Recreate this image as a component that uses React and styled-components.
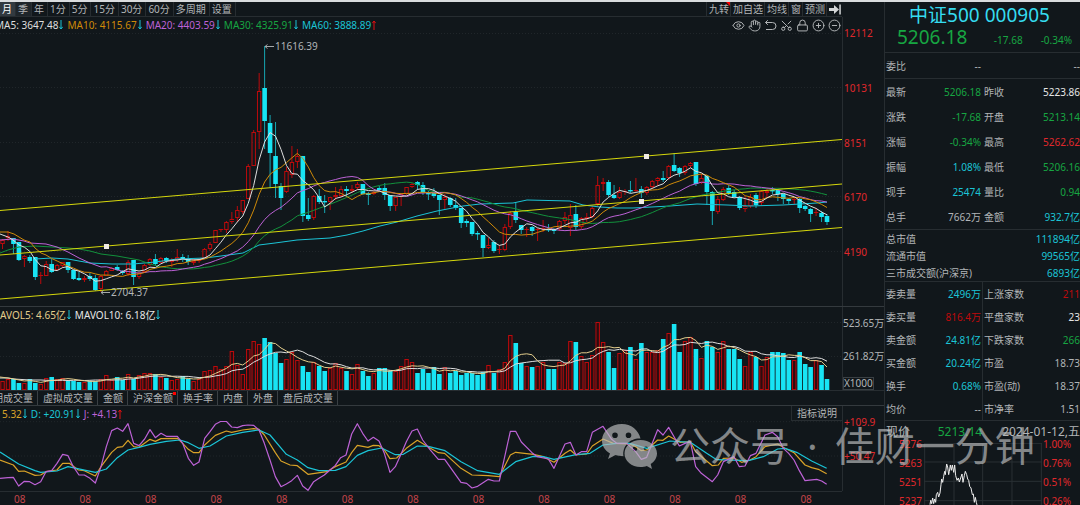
import React from "react";
import styled, { createGlobalStyle, css } from "styled-components";
import { Eye, Hand, Scissors, Lock, CirclePlus, CircleMinus } from "lucide-react";

const C = {
  bg: "#11171b",
  line: "#272d31",
  text: "#b2b5b7",
  white: "#e6e6e6",
  red: "#e0282c",
  deepRed: "#bd0a0c",
  green: "#17a642",
  cyan: "#1bc4d6",
  bright: "#18e4f4",
  orange: "#cf8a08",
  gold: "#d9a328",
  cream: "#e3cd8c",
  purple: "#bd62d6",
  yellow: "#d6d80c",
};

const Global = createGlobalStyle`
  * { box-sizing: border-box; }
  body {
    margin: 0;
    background: ${C.bg};
    color: ${C.text};
    font: 10px/14px "Noto Sans", "Noto Sans CJK SC", sans-serif;
  }
  button { font: inherit; color: inherit; background: none; border: 0; padding: 0; cursor: pointer; }
  dl, dd, dt, h1, p { margin: 0; font-weight: 400; }
`;

/* ---------- market data, in chart units ---------- */
// direction, high, body top, body bottom, low
const CANDLES = `
r 239 240 244 249|r 231 236 238 241|c 238 238 244 254|c 242 242 260 261|r 255 256 259 267|c 255 257 261 263
c 257 257 277 280|r 272 275 276 284|r 261 264 276 276|c 259 264 272 273|r 264 265 270 270|r 262 262 266 268
c 262 262 270 273|c 270 270 279 280|c 272 278 280 281|r 276 278 280 282|c 273 276 279 281|c 275 278 290 291
r 275 276 289 292|r 270 271 276 276|r 267 268 271 271|c 265 267 270 271|c 270 271 273 275|r 260 262 274 276
c 260 260 277 285|r 272 273 277 279|r 264 265 272 273|r 258 259 265 266|c 254 259 264 266|r 257 258 263 263
c 257 258 261 263|r 258 260 262 267|r 249 257 260 262|c 254 257 259 262|c 255 259 262 265|r 259 261 263 265
r 258 259 261 263|r 248 249 258 259|r 242 244 249 251|r 230 230 243 243|r 229 229 230 232|r 221 222 230 233
r 212 219 222 224|r 206 210 218 222|r 200 200 212 214|r 164 166 199 199|r 130 132 166 166|r 73 91 132 149
c 46 88 121 149|c 115 123 153 188|c 122 156 184 198|c 183 186 198 210|r 167 171 192 193|r 146 162 175 178
r 149 156 162 168|c 156 156 216 222|c 198 215 219 221|r 195 196 218 220|c 189 196 202 204|c 195 201 202 213
r 197 197 202 210|r 187 195 197 200|r 186 189 196 197|c 186 189 191 197|r 185 189 191 193|r 182 184 188 190
c 184 184 194 195|c 192 193 195 205|r 191 192 194 195|c 186 188 190 191|c 183 188 195 200|c 195 195 206 211
r 197 197 206 211|r 193 194 197 206|r 187 187 194 195|r 183 184 187 188|c 181 182 185 190|c 182 185 193 195
c 191 193 194 200|c 188 193 196 198|c 195 195 200 215|r 194 197 200 209|c 197 198 205 207|c 198 205 208 210
c 208 208 223 228|c 219 221 223 227|c 222 222 234 236|c 231 233 234 240|c 235 235 248 257|r 238 245 248 249
c 240 242 251 253|r 245 249 250 254|r 224 227 250 251|r 211 213 227 229|c 202 212 220 223|c 225 225 230 234
r 227 229 230 237|c 226 227 231 236|r 228 229 230 241|r 220 228 229 232|c 224 229 230 232|c 228 229 231 234
r 220 221 229 231|r 212 217 221 224|r 204 215 228 236|c 205 214 227 230|r 217 218 227 229|r 213 217 219 222
r 206 208 217 218|r 176 185 204 207|r 178 182 184 191|c 180 182 195 197|c 185 195 198 199|r 187 192 198 199
r 189 191 192 195|c 181 190 191 193|r 178 190 191 192|c 186 189 193 198|r 186 187 193 195|r 180 181 187 189
r 177 178 181 186|c 171 178 180 182|r 165 166 178 180|c 153 165 171 172|c 167 168 173 177|r 165 166 173 175
r 162 163 166 168|c 162 162 184 186|r 174 178 183 184|c 175 176 192 205|c 191 192 211 225|r 196 199 212 214
r 187 189 200 201|c 185 188 193 195|c 190 192 197 198|c 196 197 208 210|r 196 206 209 212|r 194 197 206 208
c 193 195 205 208|r 190 191 203 205|r 189 191 193 198|c 187 190 191 194|c 189 190 194 201|c 193 194 199 204
c 198 199 201 204|r 197 199 200 204|c 198 199 208 213|c 205 206 209 211|c 208 209 214 222|r 208 212 213 216
c 211 213 217 222|c 214 216 222 225`
  .trim()
  .split(/[|\n]/)
  .map((row) => {
    const [dir, high, top, bottom, low] = row.trim().split(" ");
    return { up: dir === "r", high: +high, top: +top, bottom: +bottom, low: +low };
  });

const VOLUMES = [
  381, 379, 379, 383, 383, 379, 383, 384, 378, 377, 379, 378, 381, 381, 382, 382, 381, 381, 379, 375,
  380, 377, 380, 374, 379, 375, 373, 373, 374, 377, 378, 380, 379, 376, 379, 381, 379, 371, 370, 366,
  369, 366, 351, 365, 374, 349, 341, 344, 338, 342, 353, 363, 359, 352, 360, 366, 372, 362, 366, 371,
  368, 363, 368, 371, 374, 364, 371, 376, 373, 368, 368, 371, 371, 366, 359, 362, 373, 369, 373, 367,
  374, 367, 373, 371, 375, 373, 373, 375, 372, 365, 373, 369, 362, 335, 343, 363, 366, 367, 366, 362,
  369, 369, 362, 363, 341, 342, 356, 362, 355, 322, 342, 352, 368, 353, 350, 347, 359, 343, 352, 352,
  350, 339, 333, 324, 352, 341, 337, 349, 358, 341, 347, 352, 341, 349, 349, 359, 366, 352, 357, 366,
  357, 352, 352, 353, 360, 360, 352, 364, 367, 360, 365, 379,
];

const STEP = 5.46;
const xOf = (i) => 827 - STEP * (CANDLES.length - 1 - i);
const closes = CANDLES.map((c) => (c.up ? c.top : c.bottom));

const movingAverage = (values, n) =>
  values
    .map((_, i) => [xOf(i), values.slice(i - n + 1, i + 1).reduce((a, b) => a + b, 0) / n])
    .slice(n - 1);

const pairs = (text) => text.trim().split(/\s+/).map((p) => p.split(",").map(Number));
const shift = (points, dx) => points.map(([x, y]) => [x + dx, y]);
const join = (points) => points.map((p) => p.join(",")).join(" ");

const MA5 = [...pairs("0,234 8,237 13,240 19,245"), ...movingAverage(closes, 5)];
const MA10 = [...pairs("0,232 8,232 14,234 24,240 30,242 35,248 41,253 46,255"), ...movingAverage(closes, 10)];
const MA20 = [
  ...pairs("0,240 13,239 24,241 30,243 46,244 57,247 68,252 79,258 90,263 101,267"),
  ...movingAverage(closes, 20),
];
const MA30 = [
  ...pairs("0,253 8,250 19,247 35,246 52,247 68,248 79,249 90,251 101,254 117,256 128,258 139,260 150,264"),
  ...movingAverage(closes, 30),
];
const MA60 = pairs(`35,259 52,258 68,259 90,263 112,264 133,264 155,262 177,259 205,258 221,256 243,253 259,245
  275,243 297,240 330,238 347,235 363,231 380,226 397,222 417,216 437,211 463,206 480,204 513,203 527,200
  570,201 583,205 600,207 617,208 633,208 670,206 697,204 727,205 750,206 783,205 800,204 817,203 827,202`);
const VOL5 = [...pairs("0,377 8,378 14,379 19,380"), ...movingAverage(VOLUMES, 5)];
const VOL10 = [...pairs("0,378 8,378 14,379 30,380 41,380"), ...movingAverage(VOLUMES, 10)];

// KDJ lines are kept on a grid three times finer than the price chart
const LINE_J = [
  ...pairs(`0,535 24,533 40,532 56,558 73,544 89,545 105,554 122,545 138,515 155,512 171,490 188,463 204,467
  220,500 237,525 253,525 270,535 286,549 303,500 319,440 335,392 352,384 368,394 384,371 401,430 417,437
  434,417 450,389 466,413 483,400 499,409 532,409 548,430 565,475 581,496 597,486 614,415 630,395 646,373
  663,364 679,364 695,381 712,383 728,377 744,375 761,376 777,390 793,430 810,480 826,530 843,560 859,552
  875,542 892,526 908,558 924,571 941,545 957,535 973,525 990,510 1006,496 1022,473 1038,465 1055,402
  1072,371 1088,400 1104,423 1120,412 1137,423 1153,460 1170,517 1186,500 1202,465 1219,425 1236,393
  1252,387 1268,420 1285,442`),
  ...shift(pairs(`0,449 25,478 44,478 93,547 110,550 126,564 143,559 175,538 192,543 208,543 241,394 257,394
  274,426 306,458 322,470 355,477 372,505 405,432 421,427 438,465 454,455 470,455 487,397 519,379 545,418
  560,430 590,430 617,455 634,478 650,472 683,389 699,405 716,382 748,438 765,430 781,425 797,500 814,520
  847,545 863,525 880,485 912,470 928,500 945,498 961,467 978,460 1005,405 1027,397 1043,410 1060,445
  1076,460 1092,480 1108,512 1125,542 1160,538 1175,543 1190,553`), 1290),
];
const LINE_K = [
  ...pairs(`0,480 40,495 56,514 73,513 105,526 122,525 138,515 171,510 188,490 208,490 235,510 253,512 286,528
  303,500 335,457 352,442 368,440 384,421 401,440 417,442 450,418 466,424 483,416 532,415 548,430 565,448
  581,458 597,458 614,435 646,406 679,393 695,397 728,390 761,386 777,388 793,405 826,458 843,483 870,495
  892,497 924,523 980,515 1006,500 1038,486 1055,458 1072,436 1104,442 1120,436 1137,437 1153,450 1170,476
  1190,474 1219,445 1252,421 1285,441`),
  ...shift(pairs(`25,458 44,460 93,505 126,525 175,527 208,530 241,465 257,457 310,463 340,470 372,487 405,460
  421,450 438,465 470,462 487,438 519,417 550,430 600,432 617,440 634,452 650,450 683,420 699,421 716,408
  750,427 781,425 797,455 847,497 865,495 880,475 912,474 935,487 960,480 978,470 1005,440 1043,432
  1065,445 1092,458 1125,495 1145,503 1165,508 1190,521`), 1290),
];
const LINE_D = [
  ...pairs(`0,456 56,492 105,512 122,517 171,513 204,500 286,517 319,507 352,473 384,450 417,442 450,433 499,424
  540,420 565,428 597,445 630,438 679,408 728,397 777,390 810,405 859,463 892,480 924,503 957,512 1006,511
  1038,500 1072,466 1104,452 1145,444 1186,464 1210,463 1252,438 1285,439`),
  ...shift(pairs(`45,452 93,485 143,512 208,523 257,485 310,469 340,470 372,478 438,464 480,460 519,435 560,430
  600,430 650,445 720,423 781,427 830,460 860,479 955,482 1000,470 1043,447 1065,445 1100,457 1145,483
  1190,505`), 1290),
];
const INTRADAY = pairs(`150,825 152,812 155,822 158,805 161,822 164,808 167,818 169,795 173,788 176,802 180,790
  183,765 185,748 188,758 191,740 194,725 196,735 200,703 203,712 206,735 208,725 211,706 214,722 217,706
  221,728 224,706 227,738 231,752 235,745 238,757 242,745 246,733 249,758 253,738 256,725 260,735 263,748
  266,752 269,770 273,775 277,795 280,793 283,818 286,803 289,818 292,830`);

/* ---------- styled parts ---------- */
const Page = styled.main`
  position: relative;
  display: grid;
  grid-template-columns: minmax(0, 1fr) 196px;
  height: 100vh;
  overflow: hidden;
  border-top: 2px solid #d9dcde;
`;
const Charts = styled.section`
  min-width: 0;
`;
const Toolbar = styled.nav`
  display: flex;
  height: 15px;
  margin-right: 42px;
  border-bottom: 1px solid ${C.line};
`;
const Spacer = styled.span`
  flex: 1;
`;
const PeriodButton = styled.button`
  padding: 0 3px 0 2px;
  line-height: 14px;
  white-space: nowrap;
  border-right: 1px solid ${C.line};
  ${(p) => p.$shade && css`background: ${p.$shade};`}
  ${(p) => p.$active && css`color: #fff;`}
`;
const ToolButton = styled.button`
  position: relative;
  padding: 0 1px 0 2px;
  line-height: 14px;
  white-space: nowrap;
  border-left: 1px solid ${C.line};
  svg { display: block; }
`;
const Corner = styled.i`
  position: absolute;
  top: 0;
  right: 0;
  border-top: 4px solid #f00;
  border-left: 4px solid transparent;
`;
const Dot = styled.i`
  position: absolute;
  top: 1px;
  right: 1px;
  width: 3px;
  height: 3px;
  background: #f00;
`;
const Panel = styled.div`
  display: grid;
  grid-template-columns: minmax(0, 1fr) 42px;
  ${(p) => p.$ruled && css`border-top: 1px solid #343a3e;`}
`;
const Plot = styled.div`
  min-width: 0;
  overflow: hidden;
`;
const Drawing = styled.svg`
  display: block;
  width: 100%;
  height: auto;
  font-size: 10px;
`;
const Legend = styled.div`
  display: flex;
  align-items: center;
  gap: 4px;
  height: ${(p) => p.$height}px;
  margin-left: ${(p) => p.$start}px;
  white-space: nowrap;
`;
const LegendItem = styled.span`
  display: flex;
  align-items: center;
  gap: 1px;
  color: ${(p) => p.$color};
`;
const DrawTools = styled.div`
  display: flex;
  gap: 3px;
  margin-left: auto;
  padding-right: 1px;
  button { display: block; width: 13px; height: 13px; }
  svg { display: block; }
`;
const NoteButton = styled.button`
  margin-left: auto;
  padding: 0 5px;
  border-left: 1px solid ${C.line};
  border-bottom: 1px solid ${C.line};
`;
const Axis = styled.div`
  display: flex;
  flex-direction: column;
  justify-content: space-between;
  padding: ${(p) => p.$pad};
  border-left: 1px solid ${C.line};
  color: ${(p) => p.$color};
  white-space: nowrap;
  overflow: hidden;
`;
const Unit = styled.span`
  align-self: flex-start;
  margin-top: -5px;
  line-height: 11px;
  border: 1px solid #3a4044;
`;
const Tabs = styled.div`
  display: flex;
  height: 15px;
  overflow: hidden;
  border-top: 1px solid ${C.line};
  padding-right: 42px;
`;
const Tab = styled.button`
  position: relative;
  flex: none;
  padding: 0 4px 0 5px;
  border-right: 1px solid #3a4044;
  line-height: 14px;
  &:first-child { margin-left: -12px; }
`;
const Dates = styled.div`
  display: flex;
  justify-content: space-between;
  margin-right: 42px;
  padding: 0 30px 0 14px;
  border-top: 1px solid ${C.line};
  color: #c5454a;
`;
const Side = styled.aside`
  border-left: 1px solid ${C.line};
  white-space: nowrap;
  overflow: hidden;
`;
const Title = styled.h1`
  height: 24px;
  padding-right: 6px;
  font-size: 19px;
  line-height: 26px;
  text-align: center;
  color: #35dcf0;
`;
const PriceLine = styled.p`
  display: flex;
  align-items: baseline;
  height: 26px;
  padding: 0 8px 0 12px;
  line-height: 22px;
  color: ${C.green};
  strong { flex: 1; font-size: 19px; font-weight: 400; }
  span { margin-left: 18px; }
`;
const Block = styled.dl`
  border-top: 1px solid ${C.line};
`;
const Row = styled.div`
  display: grid;
  grid-template-columns: ${(p) => (p.$single ? "1fr" : "98px 1fr")};
  height: ${(p) => p.$height}px;
`;
const Cell = styled.div`
  display: flex;
  align-items: center;
  justify-content: space-between;
  padding-left: 1px;
  dd { color: ${(p) => p.$color}; }
  &:first-child:not(:only-child) {
    padding-right: 1px;
    border-right: 1px solid ${(p) => (p.$split ? C.line : "transparent")};
  }
`;
const Spot = styled.p`
  display: flex;
  justify-content: space-between;
  height: 15px;
  padding-left: 1px;
  border-top: 1px solid ${C.line};
  font-size: 12px;
  line-height: 22px;
  em { flex: 1; font-style: normal; padding-right: 20px; text-align: right; color: ${C.green}; }
`;
const Mini = styled.div`
  display: grid;
  grid-template-columns: 39px 118px 38px;
  color: ${C.red};
`;
const MiniLabels = styled.div`
  line-height: 19px;
  padding: 0 2px 0 1px;
  text-align: ${(p) => p.$align};
`;
const MiniDrawing = styled.svg`
  display: block;
  width: 100%;
  height: auto;
  margin-top: 8px;
`;
const Watermark = styled.div`
  position: absolute;
  left: 602px;
  top: 414px;
  display: flex;
  align-items: center;
  color: #b9bbbc;
  opacity: 0.68;
  font-size: 40px;
  line-height: 60px;
  white-space: nowrap;
  pointer-events: none;
  svg { margin-right: 12px; }
  i { margin: 0 17px; font-style: normal; }
`;

/* ---------- drawings ---------- */
const Arrow = ({ up }) => (
  <svg width="4" height="10" viewBox="0 0 4 10" stroke={up ? "#e01010" : C.cyan} fill="none">
    <path d={up ? "M2 10V1M0.3 3.2L2 1L3.7 3.2" : "M2 0V9M0.3 6.8L2 9L3.7 6.8"} />
  </svg>
);

const Line = ({ points, color, width = 1 }) => (
  <polyline points={join(points)} fill="none" stroke={color} strokeWidth={width} strokeLinejoin="round" />
);

const GridLines = ({ at, to = 842 }) =>
  at.map((y) => <path key={y} d={`M0 ${y}.5H${to}`} stroke="#20262a" strokeDasharray="1 2" />);

const Candle = ({ c, x }) => {
  const h = Math.max(1, c.bottom - c.top);
  if (!c.up)
    return (
      <g>
        <path d={`M${x} ${c.high}V${c.low}`} stroke={C.bright} strokeOpacity="0.7" />
        <rect x={x - 2.3} y={c.top} width="4.6" height={Math.max(1.4, h)} fill={C.bright} />
      </g>
    );
  return (
    <g stroke={C.deepRed} fill="none">
      <path d={`M${x} ${c.high}V${c.top}M${x} ${c.bottom}V${c.low}`} />
      {h > 1 ? <rect x={x - 1.7} y={c.top + 0.5} width="3.4" height={h - 1 || 1} /> : <path d={`M${x - 2.3} ${c.top + 0.5}h4.6`} />}
    </g>
  );
};

const PriceChart = () => (
  <Drawing viewBox="0 33 842 273" role="img" aria-label="月K线">
    <GridLines at={[33, 87, 142, 196, 251]} />
    {CANDLES.map((c, i) => <Candle key={i} c={c} x={xOf(i)} />)}
    <Line points={MA60} color={C.cyan} />
    <Line points={MA30} color="#12913c" />
    <Line points={MA20} color={C.purple} />
    <Line points={MA10} color={C.orange} />
    <Line points={MA5} color="#dedede" />
    <path d="M0 210.5L842 139.5M0 255L842 184M0 299L842 227.5" stroke={C.yellow} fill="none" />
    <path d="M104 244h5v5h-5zM644 154h5v5h-5zM639 199h5v5h-5z" fill="#f0ebe6" />
    <g stroke="#a4a8aa" fill="none">
      <path d="M265 46.5h9M267.5 44.5l-2.5 2l2.5 2M101 292.5h9M103.500 290.5l-2.500 2l2.500 2" />
    </g>
    <g fill="#b2b5b7">
      <text x="275" y="50">11616.39</text>
      <text x="111" y="296">2704.37</text>
    </g>
  </Drawing>
);

const VolumeChart = () => (
  <Drawing viewBox="0 322 842 68" role="img" aria-label="成交量">
    <GridLines at={[322, 356]} />
    {VOLUMES.map((y, i) =>
      CANDLES[i].up ? (
        <rect key={i} x={xOf(i) - 1.7} y={y + 0.5} width="3.4" height={389 - y} fill="#2a0d10" stroke={C.deepRed} />
      ) : (
        <rect key={i} x={xOf(i) - 2.3} y={y} width="4.6" height={390 - y} fill={C.bright} />
      )
    )}
    <Line points={VOL10} color="#dedede" />
    <Line points={VOL5} color={C.cream} />
  </Drawing>
);

const KdjChart = () => (
  <Drawing viewBox="0 363 2526 210" role="img" aria-label="KDJ">
    <path d="M0 365H2526M0 468H2526" stroke="#20262a" strokeWidth="3" strokeDasharray="3 6" />
    <Line points={LINE_K} color={C.gold} width={3.6} />
    <Line points={LINE_D} color={C.cyan} width={3.6} />
    <Line points={LINE_J} color={C.purple} width={3.6} />
  </Drawing>
);

const WeChat = () => (
  <svg width="56" height="46" viewBox="0 0 56 46">
    <path
      fill="currentColor"
      fillRule="evenodd"
      d="M20 1C9 1 0 8 0 17.500c0 5.500 3 10 8 13L6 36l7.500-4c2 .7 5 1.200 8 1.200C20 23 28 15 38.500 15.500C36.500 7 29 1 20 1zM13 9.500a2.800 2.800 0 1 1 0 5.600a2.800 2.800 0 0 1 0-5.600zM26.500 9.500a2.800 2.800 0 1 1 0 5.600a2.800 2.800 0 0 1 0-5.600z"
    />
    <path
      fill="currentColor"
      fillRule="evenodd"
      d="M38.500 17C29.500 17 22.500 23 22.500 30.500S29.500 44 38.500 44c2.300 0 4.500-.4 6.300-1.100L50 46l-1.300-5c3.800-2.500 6.300-6.200 6.300-10.500C55 23 47.500 17 38.500 17zM33 23.500a2.300 2.300 0 1 1 0 4.600a2.300 2.300 0 0 1 0-4.600zM44 23.500a2.300 2.300 0 1 1 0 4.600a2.300 2.300 0 0 1 0-4.600z"
    />
  </svg>
);

const UndoIcon = () => (
  <svg width="13" height="13" viewBox="0 0 13 13" fill="none" stroke="currentColor">
    <path d="M1.500 3.500H8.500a3.500 3.500 0 0 1 0 7H2M3.800 1.200L1.500 3.500l2.300 2.300" />
  </svg>
);

const JumpIcon = () => (
  <svg width="12" height="14" viewBox="0 0 12 14" fill="#d4d6d7">
    <path d="M0 6h5V3l5 4.500L5 12V9H0zM10.300 2.500h1.500v10h-1.500z" />
  </svg>
);

/* ---------- content ---------- */
const PERIODS = ["月", "季", "年", "1分", "5分", "15分", "30分", "60分", "多周期", "设置"];
const INDICATORS = ["期成交量", "虚拟成交量", "金额", "沪深金额", "换手率", "内盘", "外盘", "盘后成交量"];
const AVERAGES = [
  ["MA5: 3647.48", "#dedede"],
  ["MA10: 4115.67", C.orange],
  ["MA20: 4403.59", C.purple],
  ["MA30: 4325.91", C.green],
  ["MA60: 3888.89", C.cyan, true],
];
const ICON = { size: 13, strokeWidth: 1.8 };
const TOOLS = [
  ["显示", <Eye {...ICON} />],
  ["拖动", <Hand {...ICON} />],
  ["撤销", <UndoIcon />],
  ["剪切", <Scissors {...ICON} transform="rotate(-90)" />],
  ["锁定", <Lock {...ICON} />],
  ["放大", <CirclePlus {...ICON} />],
  ["缩小", <CircleMinus {...ICON} />],
];
const QUOTES = [
  [["最新", "5206.18", C.green], ["昨收", "5223.86", C.white]],
  [["涨跌", "-17.68", C.green], ["开盘", "5213.14", C.green]],
  [["涨幅", "-0.34%", C.green], ["最高", "5262.62", C.red]],
  [["振幅", "1.08%", C.cyan], ["最低", "5206.16", C.green]],
  [["现手", "25474", C.cyan], ["量比", "0.94", C.green]],
  [["总手", "7662万", C.text], ["金额", "932.7亿", C.cyan]],
];
const VALUES = [
  [["总市值", "111894亿", C.cyan]],
  [["流通市值", "99565亿", C.cyan]],
  [["三市成交额(沪深京)", "6893亿", C.cyan]],
];
const BREADTH = [
  [["委卖量", "2496万", C.cyan], ["上涨家数", "211", C.deepRed]],
  [["委买量", "816.4万", C.deepRed], ["平盘家数", "23", C.white]],
  [["卖金额", "24.81亿", C.cyan], ["下跌家数", "266", C.green]],
  [["买金额", "20.24亿", C.cyan], ["市盈", "18.73", C.text]],
  [["换手", "0.68%", C.cyan], ["市盈(动)", "18.37", C.text]],
  [["均价", "--", C.text], ["市净率", "1.51", C.text]],
];

const QuoteBlock = ({ rows, height, split }) => (
  <Block>
    {rows.map((cells) => (
      <Row key={cells[0][0]} $height={height} $single={cells.length === 1}>
        {cells.map(([label, value, color]) => (
          <Cell key={label} $color={color} $split={split}>
            <dt>{label}</dt>
            <dd>{value}</dd>
          </Cell>
        ))}
      </Row>
    ))}
  </Block>
);

export default function App() {
  return (
    <>
      <Global />
      <Page>
        <Charts>
          <Toolbar>
            {PERIODS.map((p, i) => (
              <PeriodButton key={p} $active={i === 0} $shade={i === 0 ? "#323a40" : i === 1 ? "#1e252a" : undefined}>
                {p}
              </PeriodButton>
            ))}
            <Spacer />
            <ToolButton>九转<Corner /></ToolButton>
            <ToolButton>加自选</ToolButton>
            <ToolButton>均线</ToolButton>
            <ToolButton>窗</ToolButton>
            <ToolButton>预测</ToolButton>
            <ToolButton aria-label="收起"><JumpIcon /></ToolButton>
          </Toolbar>

          <Panel>
            <Plot>
              <Legend $height={16} $start={-5}>
                {AVERAGES.map(([text, color, up]) => (
                  <LegendItem key={text} $color={color}>{text}<Arrow up={up} /></LegendItem>
                ))}
                <DrawTools>
                  {TOOLS.map(([label, icon]) => <button key={label} aria-label={label}>{icon}</button>)}
                </DrawTools>
              </Legend>
              <PriceChart />
            </Plot>
            <Axis $pad="9px 0 47px 1px" $color={C.red}>
              {["12112", "10131", "8151", "6170", "4190"].map((v) => <span key={v}>{v}</span>)}
            </Axis>
          </Panel>

          <Panel $ruled>
            <Plot>
              <Legend $height={15} $start={-9}>
                <LegendItem $color={C.cream}>MAVOL5: 4.65亿<Arrow /></LegendItem>
                <LegendItem $color={C.white}>MAVOL10: 6.18亿<Arrow /></LegendItem>
              </Legend>
              <VolumeChart />
            </Plot>
            <Axis $pad="9px 0 0 0" $color={C.text}>
              <span>523.65万</span>
              <span>261.82万</span>
              <Unit>X1000</Unit>
            </Axis>
          </Panel>

          <Tabs>
            {INDICATORS.map((t) => <Tab key={t}>{t}{t === "沪深金额" && <Dot />}</Tab>)}
          </Tabs>

          <Panel $ruled>
            <Plot>
              <Legend $height={15} $start={2}>
                <LegendItem $color={C.gold}>5.32<Arrow /></LegendItem>
                <LegendItem $color={C.cyan}>D: +20.91<Arrow /></LegendItem>
                <LegendItem $color={C.purple}>J: +4.13<Arrow up /></LegendItem>
                <NoteButton>指标说明</NoteButton>
              </Legend>
              <KdjChart />
            </Plot>
            <Axis $pad="9px 0 28px 1px" $color={C.red}>
              <span>+109.9</span>
              <span>+50.47</span>
            </Axis>
          </Panel>
          <Dates>
            {Array.from({ length: 13 }, (_, i) => <span key={i}>08</span>)}
          </Dates>
        </Charts>

        <Side>
          <Title>中证500 000905</Title>
          <PriceLine><strong>5206.18</strong><span>-17.68</span><span>-0.34%</span></PriceLine>
          <QuoteBlock rows={[[["委比", "--", C.text], ["", "--", C.text]]]} height={25} />
          <QuoteBlock rows={QUOTES} height={25} />
          <QuoteBlock rows={VALUES} height={17} />
          <QuoteBlock rows={BREADTH} height={23} split />
          <Spot><span>现价</span><em>5213.14</em><span>2024-01-12,五</span></Spot>
          <Mini>
            <MiniLabels $align="right">
              {["5276", "5263", "5251", "5237"].map((v) => <div key={v}>{v}</div>)}
            </MiniLabels>
            <MiniDrawing viewBox="132 640 354 190" role="img" aria-label="分时走势">
              <path
                d="M132 641H486M132 697H486M132 755H486M132 813H486M134 641V830M222 641V830M308 641V830M396 641V830M484 641V830"
                stroke="#2a3034"
                strokeWidth="3"
                fill="none"
              />
              <Line points={INTRADAY} color="#ededed" width={3} />
            </MiniDrawing>
            <MiniLabels $align="left">
              {["1.00%", "0.76%", "0.51%", "0.26%"].map((v) => <div key={v}>{v}</div>)}
            </MiniLabels>
          </Mini>
        </Side>

        <Watermark>
          <WeChat />
          <span>公众号</span>
          <i>·</i>
          <span>佳财一分钟</span>
        </Watermark>
      </Page>
    </>
  );
}
